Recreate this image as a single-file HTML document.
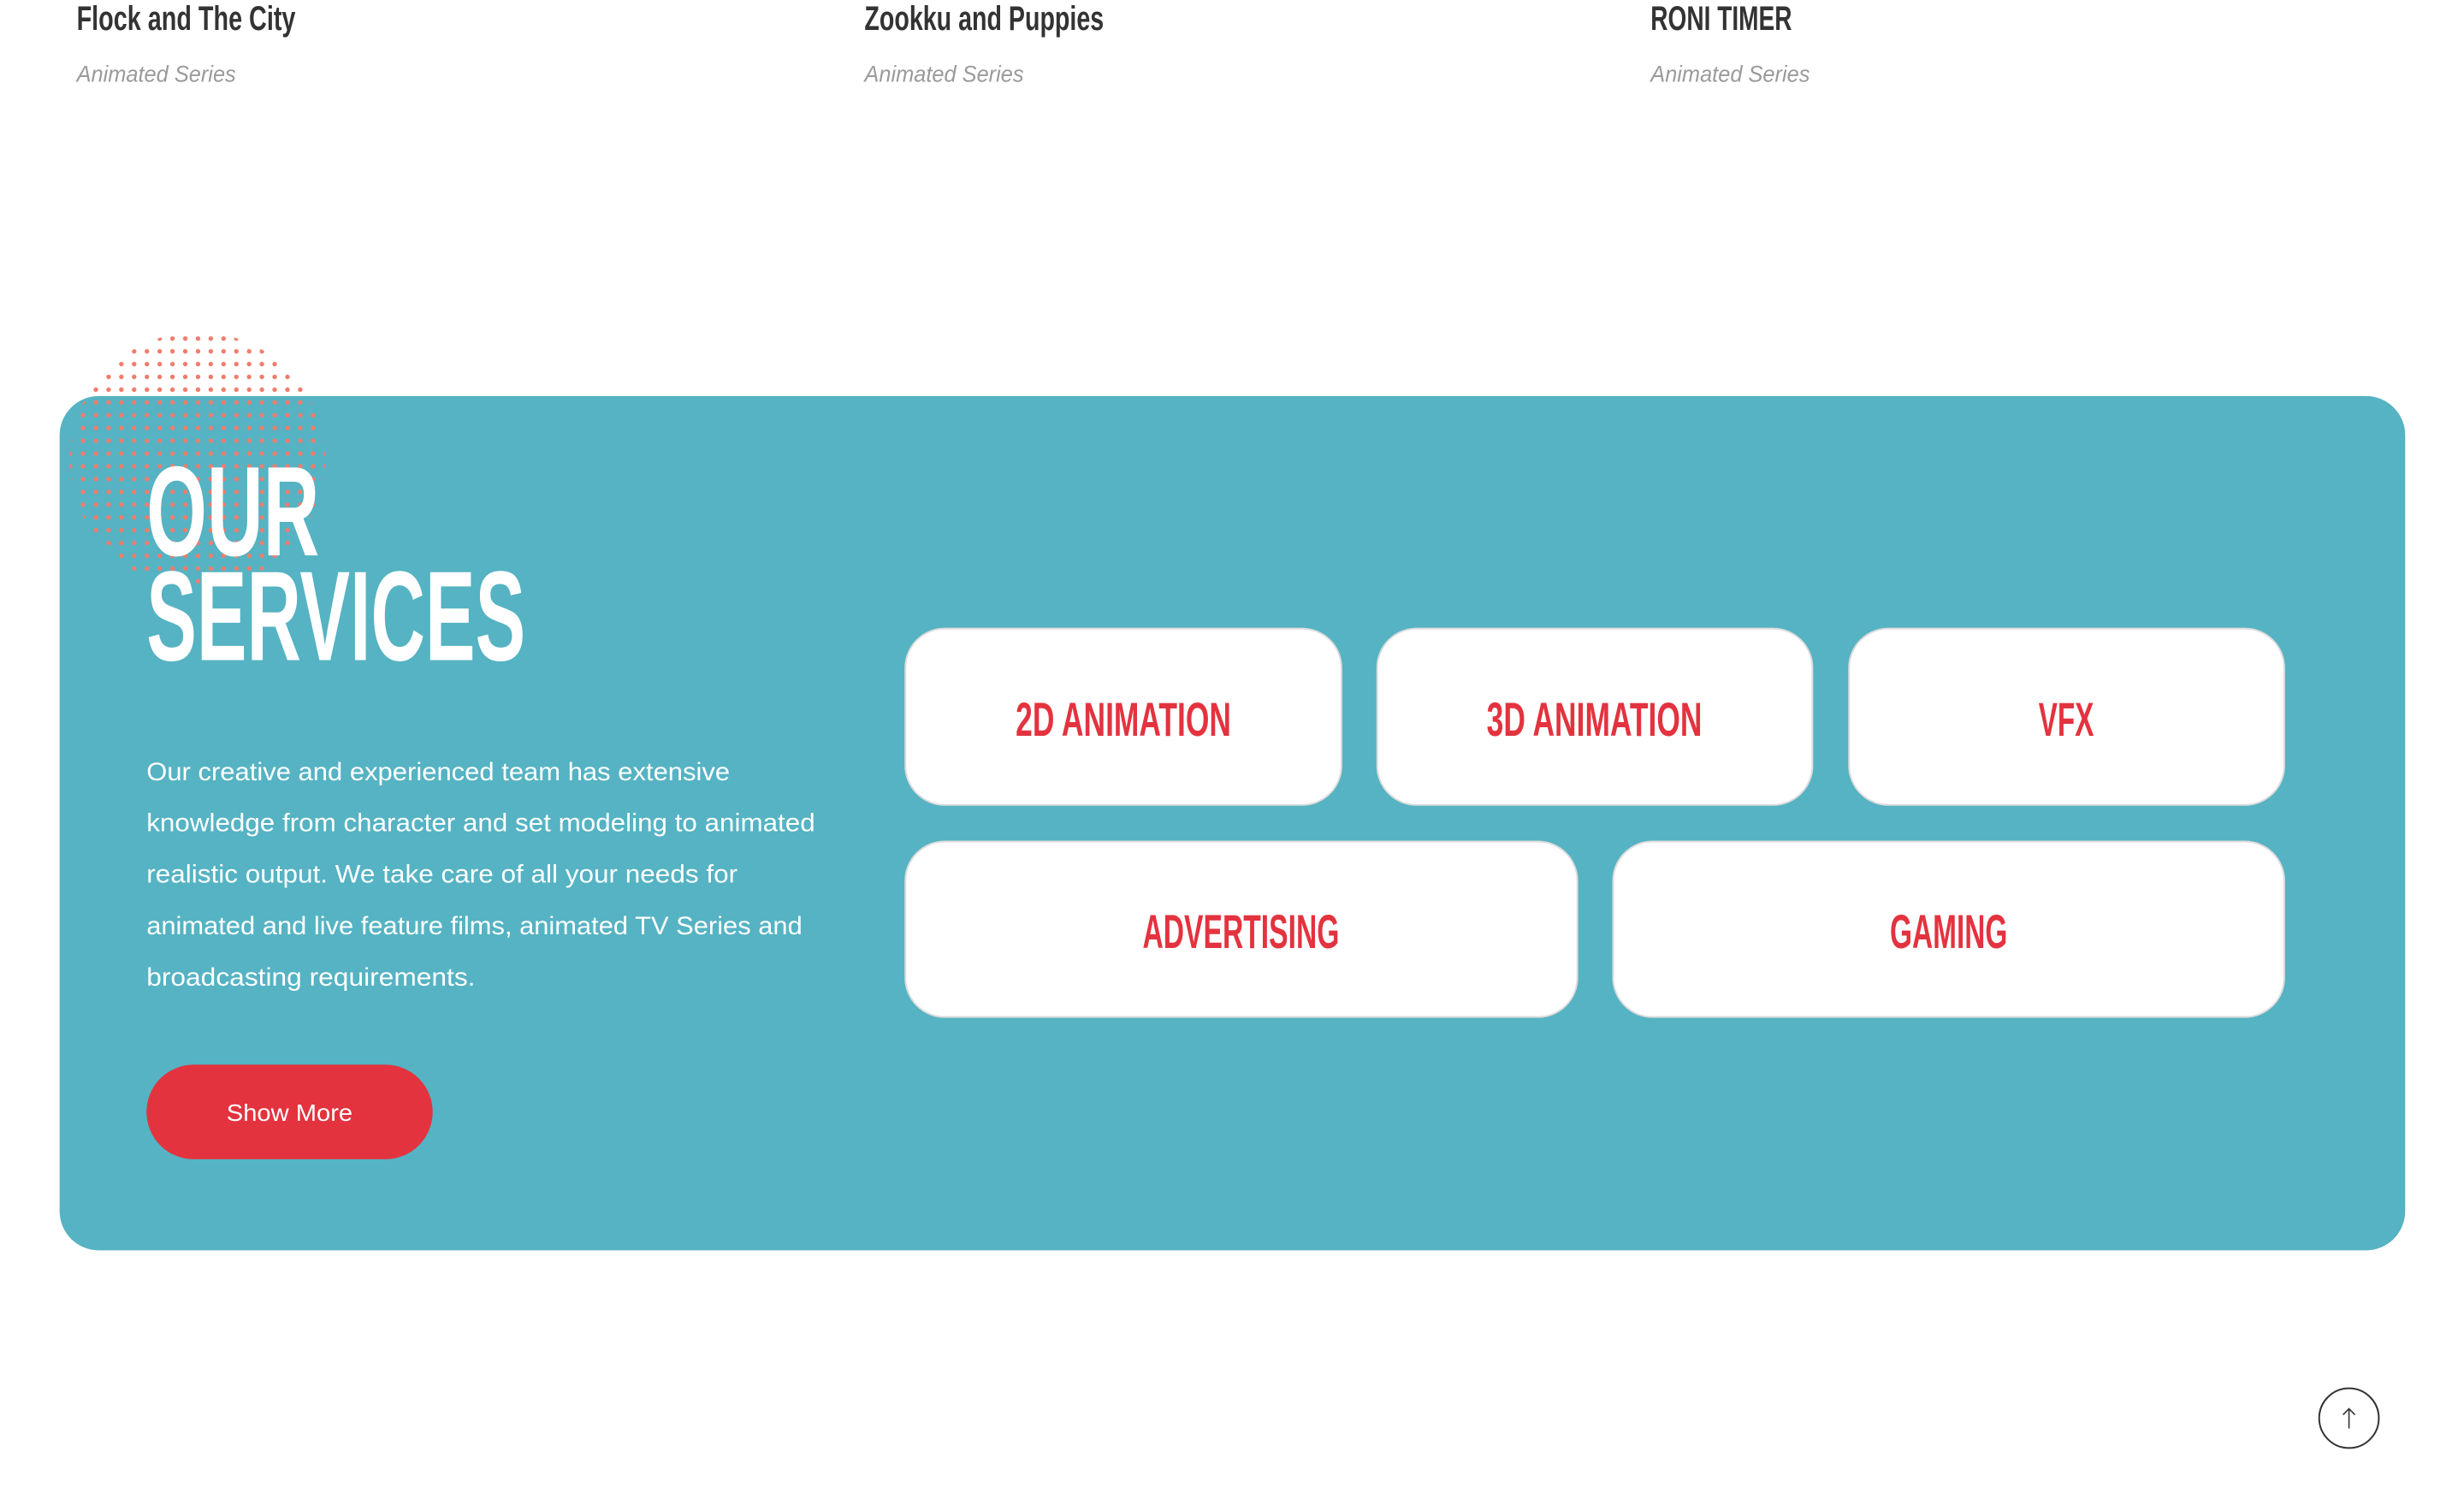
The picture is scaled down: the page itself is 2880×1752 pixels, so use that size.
<!DOCTYPE html>
<html><head><meta charset="utf-8"><style>html,body{margin:0;padding:0;background:#fff;width:2880px;height:1752px;overflow:hidden}</style></head>
<body>
<svg width="2880" height="1752" viewBox="0 0 2880 1752" xmlns="http://www.w3.org/2000/svg">
<defs>
<pattern id="dots" x="0" y="0" width="15" height="15" patternUnits="userSpaceOnUse">
<circle cx="7.5" cy="7.5" r="2.7" fill="#f27b6c"/>
</pattern>
<clipPath id="cc"><circle cx="232" cy="540" r="150"/></clipPath>
</defs>
<g font-family="Liberation Sans, sans-serif" transform="scale(0.9955)">
<text x="90" y="35" font-size="40" font-weight="bold" fill="#333" textLength="257" lengthAdjust="spacingAndGlyphs">Flock and The City</text>
<text x="1015" y="35" font-size="40" font-weight="bold" fill="#333" textLength="281" lengthAdjust="spacingAndGlyphs">Zookku and Puppies</text>
<text x="1938" y="35" font-size="40" font-weight="bold" fill="#333" textLength="166" lengthAdjust="spacingAndGlyphs">RONI TIMER</text>
<text x="90" y="96" font-size="27" font-style="italic" fill="#9a9a9a" textLength="187" lengthAdjust="spacingAndGlyphs">Animated Series</text>
<text x="1015" y="96" font-size="27" font-style="italic" fill="#9a9a9a" textLength="187" lengthAdjust="spacingAndGlyphs">Animated Series</text>
<text x="1938" y="96" font-size="27" font-style="italic" fill="#9a9a9a" textLength="187" lengthAdjust="spacingAndGlyphs">Animated Series</text>

<rect x="70" y="465" width="2754" height="1003" rx="46" fill="#55b3c3"/>
<rect x="70" y="380" width="330" height="330" fill="url(#dots)" clip-path="url(#cc)"/>

<text x="172" y="652" font-size="150" font-weight="bold" fill="#fff" textLength="203" lengthAdjust="spacingAndGlyphs">OUR</text>
<text x="172" y="775" font-size="150" font-weight="bold" fill="#fff" textLength="445" lengthAdjust="spacingAndGlyphs">SERVICES</text>

<g font-size="30" fill="#fff">
<text x="172" y="916" textLength="685" lengthAdjust="spacingAndGlyphs">Our creative and experienced team has extensive</text>
<text x="172" y="976" textLength="785" lengthAdjust="spacingAndGlyphs">knowledge from character and set modeling to animated</text>
<text x="172" y="1036" textLength="694" lengthAdjust="spacingAndGlyphs">realistic output. We take care of all your needs for</text>
<text x="172" y="1097" textLength="770" lengthAdjust="spacingAndGlyphs">animated and live feature films, animated TV Series and</text>
<text x="172" y="1157" textLength="386" lengthAdjust="spacingAndGlyphs">broadcasting requirements.</text>
</g>

<rect x="172" y="1250" width="336" height="111" rx="55.5" fill="#e3333f"/>
<text x="340" y="1316" font-size="28" fill="#fff" text-anchor="middle" textLength="148" lengthAdjust="spacingAndGlyphs">Show More</text>

<g fill="#fff" stroke="#dcdcdc" stroke-width="2">
<rect x="1063" y="738" width="512" height="207" rx="46"/>
<rect x="1617" y="738" width="511" height="207" rx="46"/>
<rect x="2171" y="738" width="511" height="207" rx="46"/>
<rect x="1063" y="988" width="789" height="206" rx="46"/>
<rect x="1894" y="988" width="788" height="206" rx="46"/>
</g>
<g font-size="56" font-weight="bold" fill="#e3333f" text-anchor="middle">
<text x="1319" y="864" textLength="253" lengthAdjust="spacingAndGlyphs">2D ANIMATION</text>
<text x="1872" y="864" textLength="253" lengthAdjust="spacingAndGlyphs">3D ANIMATION</text>
<text x="2426" y="864" textLength="65" lengthAdjust="spacingAndGlyphs">VFX</text>
<text x="1457" y="1113" textLength="231" lengthAdjust="spacingAndGlyphs">ADVERTISING</text>
<text x="2288" y="1113" textLength="138" lengthAdjust="spacingAndGlyphs">GAMING</text>
</g>

<circle cx="2758" cy="1665" r="35" fill="#fff" stroke="#333" stroke-width="2"/>
<path d="M2758 1677 V1654 M2751 1661 L2758 1654 L2765 1661" fill="none" stroke="#333" stroke-width="1.6"/>
</g>
</svg>
</body></html>
